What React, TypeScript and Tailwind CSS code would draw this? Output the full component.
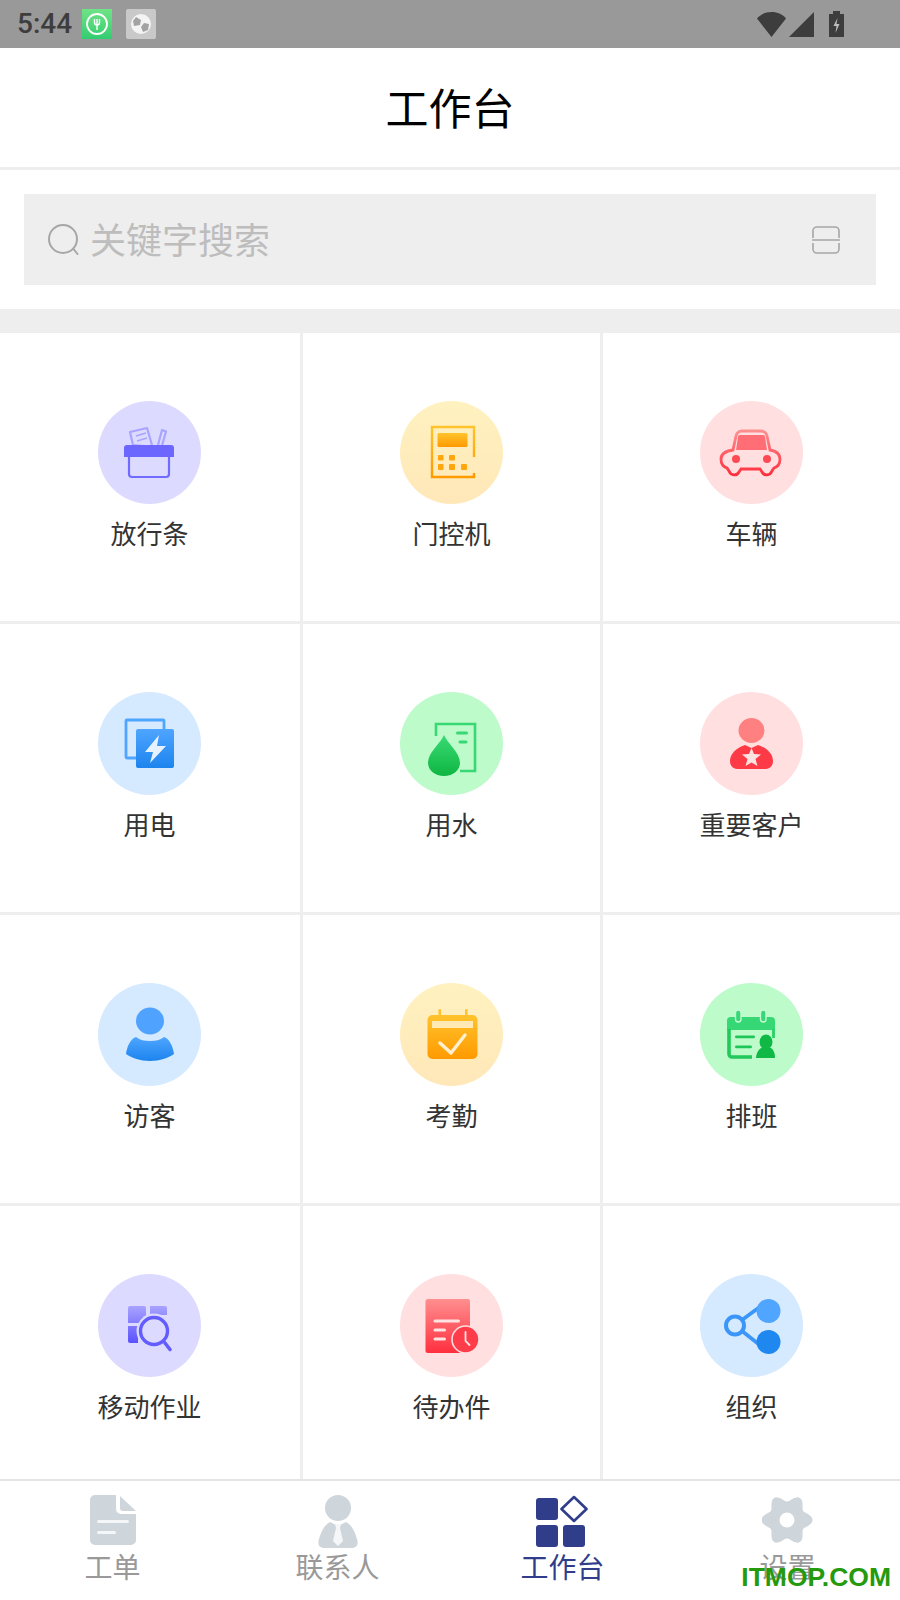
import React, { useId } from 'react';

const tones = {
  purple: { bg: 'bg-[#dcdbff]', from: '#a8a3ff', to: '#5a52ff' },
  yellow: { bg: 'bg-gradient-to-b from-[#fff2c0] to-[#ffe7b8]', from: '#ffc32d', to: '#ff9a00' },
  red: { bg: 'bg-[#ffdfdf]', from: '#ff8f8f', to: '#ff2f3f' },
  blue: { bg: 'bg-[#d5e9ff]', from: '#4fa5ff', to: '#1c84ee' },
  green: { bg: 'bg-[#bdfbca]', from: '#38da74', to: '#0fb642' },
};

type Tone = keyof typeof tones;

// all glyphs are drawn in the 103x103 box of the circle
const glyphs: Record<string, (f: string) => React.ReactNode> = {
  pass: () => (
    <>
      <g fill="none" stroke="#a9a4ff" strokeWidth="2.2" strokeLinejoin="round">
        <path d="M46 45l-11-1-3-13 17-4 5 17" />
        <path d="M38 35l10-3M39 40l10-3" strokeWidth="1.8" />
        <path d="M60 44l4-15 4 1.500-4 14" />
      </g>
      <path d="M26 47a3 3 0 0 1 3-3h44a3 3 0 0 1 3 3v9H26z" fill="#6c66ff" />
      <path d="M31 56v17a3 3 0 0 0 3 3h34a3 3 0 0 0 3-3V56" fill="none" stroke="#716bff" strokeWidth="2.2" />
    </>
  ),
  door: (f) => (
    <>
      <path d="M74 56V26H32v50h42v-4" fill="none" stroke={f} strokeWidth="2.4" />
      <rect x="37.500" y="32" width="30" height="14" rx="1.500" fill={f} />
      <g fill="#ffa50e">
        <rect x="38" y="54" width="5.500" height="5.500" rx="1" />
        <rect x="49" y="54" width="6" height="5.500" rx="1" />
        <rect x="38" y="63" width="5.500" height="6" rx="1" />
        <rect x="49" y="63" width="6" height="6" rx="1" />
        <rect x="61" y="63" width="6" height="6" rx="1" />
      </g>
    </>
  ),
  car: (f) => (
    <>
      <path
        d="M33 49l3-14a6 6 0 0 1 6-5h19a6 6 0 0 1 6 5l3 14c6 1 10 4 10 9 0 5-3 8-6 9l-2 3c-2 5-8 5-10 1l-2-3H41l-2 3c-2 4-8 4-10-1l-2-3c-3-1-6-4-6-9 0-5 5-8 12-9z"
        fill="none"
        stroke={f}
        strokeWidth="2.800"
      />
      <path d="M36 49l2-13a2 2 0 0 1 2-2h23a2 2 0 0 1 2 2l2 13z" fill="#ff6e74" />
      <circle cx="36" cy="58" r="4" fill="#ff4a55" />
      <circle cx="67" cy="58" r="4" fill="#ff4a55" />
    </>
  ),
  power: (f) => (
    <>
      <path d="M38 66h-9a1 1 0 0 1-1-1V29a1 1 0 0 1 1-1h36a1 1 0 0 1 1 1v8" fill="none" stroke="#4fa5ff" strokeWidth="2.800" />
      <rect x="38" y="37" width="38" height="39" rx="2" fill={f} />
      <path d="M61 43L47 60h8l-3 11 16-17h-9z" fill="#e6f2ff" />
    </>
  ),
  water: (f) => (
    <>
      <path d="M36 44V32h39v47H60" fill="none" stroke="#38d874" strokeWidth="2.600" />
      <rect x="56" y="39.500" width="12" height="3" rx="1.500" fill="#38d874" />
      <rect x="58.500" y="48.500" width="9" height="3" rx="1.500" fill="#38d874" />
      <path d="M44 43c3 8 16 17 16 28 0 7-7 13-16 13s-16-6-16-13c0-11 13-20 16-28z" fill={f} />
    </>
  ),
  vip: () => (
    <>
      <ellipse cx="51.500" cy="38.500" rx="13" ry="12.500" fill="#ff8080" />
      <path d="M45 53l6.500 3 6.500-3c9 3 15 9 15 16 0 6-4 8-9 8H39c-5 0-9-2-9-8 0-7 6-13 15-16z" fill="#ff3a47" />
      <path d="M51.500 56l2.500 6 7 .5-5.500 4.500 2 7-6-3.500-6 3.500 2-7-5.500-4.500 7-.5z" fill="#ffe3e3" />
    </>
  ),
  visitor: (f) => (
    <>
      <ellipse cx="52" cy="38" rx="14" ry="13.500" fill="#4fa3ff" />
      <path d="M38 54c4 3 8 4 14 4s10-1 14-4c6 2 9 10 10 17-6 4-14 7-24 7s-18-3-24-7c1-7 4-15 10-17z" fill={f} />
    </>
  ),
  checkin: (f) => (
    <>
      <rect x="38.500" y="26" width="2.600" height="9" rx="1.300" fill="#ffc32d" />
      <rect x="65" y="26" width="2.600" height="9" rx="1.300" fill="#ffc32d" />
      <rect x="27.500" y="32" width="50" height="44" rx="5" fill={f} />
      <rect x="32" y="38" width="41" height="7" fill="#ffe9b5" />
      <path d="M40 60l11 10 14-18" fill="none" stroke="#fff1cf" strokeWidth="3.400" strokeLinecap="round" strokeLinejoin="round" />
    </>
  ),
  shift: () => (
    <>
      <path d="M27 38a4 4 0 0 1 4-4h40a4 4 0 0 1 4 4v9H27z" fill="#35d874" />
      <rect x="35.500" y="27" width="5.500" height="12" rx="2.700" fill="#35d874" stroke="#c7f8d4" strokeWidth="1.400" />
      <rect x="60.500" y="27" width="5.500" height="12" rx="2.700" fill="#35d874" stroke="#c7f8d4" strokeWidth="1.400" />
      <path d="M29 46v25a3 3 0 0 0 3 3h20" fill="none" stroke="#22c85b" strokeWidth="3.600" />
      <path d="M73.500 46v9" stroke="#2bd066" strokeWidth="2.800" />
      <rect x="35" y="52.500" width="20" height="2.800" rx="1.400" fill="#1fc558" />
      <rect x="35" y="62.500" width="17" height="2.800" rx="1.400" fill="#1fc558" />
      <ellipse cx="66" cy="59" rx="6.500" ry="7.500" fill="#10b945" />
      <path d="M61 65h10c3 2 4 6 4 10H56c0-4 2-8 5-10z" fill="#10b945" />
    </>
  ),
  work: (f) => (
    <>
      <path d="M32 32h14a2 2 0 0 1 2 2v15H30V34a2 2 0 0 1 2-2zM52 32h15a2 2 0 0 1 2 2v7H52zM30 52h10v17h-8a2 2 0 0 1-2-2z" fill={f} />
      <circle cx="56" cy="57" r="17.500" fill="#dcdbff" />
      <circle cx="56" cy="57" r="13.500" fill="#dcdbff" stroke="#635cff" strokeWidth="3.400" />
      <path d="M67 69l5 6.500" stroke="#635cff" strokeWidth="3.600" strokeLinecap="round" />
    </>
  ),
  todo: (f) => (
    <>
      <path d="M28 25h40a2 2 0 0 1 2 2v52H28a2.500 2.500 0 0 1-2.500-2.500V27.500A2.500 2.500 0 0 1 28 25z" fill={f} />
      <rect x="33.500" y="45.500" width="26.500" height="3" rx="1.500" fill="#ffe3e3" />
      <rect x="33.500" y="54.500" width="12.500" height="3" rx="1.500" fill="#ffe3e3" />
      <rect x="33.500" y="63.500" width="12.500" height="3" rx="1.500" fill="#ffe3e3" />
      <circle cx="65.500" cy="65.500" r="13.500" fill="#ff3d4a" stroke="#ffdfdf" strokeWidth="1.600" />
      <path d="M65.500 58v9l4 4" fill="none" stroke="#ffe3e3" strokeWidth="1.800" strokeLinecap="round" />
    </>
  ),
  org: () => (
    <>
      <path d="M42 46l19-14M42 57l19 15" stroke="#3a96f8" strokeWidth="3.600" />
      <circle cx="35" cy="51.500" r="9" fill="#d5e9ff" stroke="#3a96f8" strokeWidth="4" />
      <circle cx="68.500" cy="37" r="12" fill="#4fa5ff" />
      <circle cx="68.500" cy="68" r="12" fill="#1f87f0" />
    </>
  ),
};

const items: { label: string; tone: Tone; glyph: string }[] = [
  { label: '放行条', tone: 'purple', glyph: 'pass' },
  { label: '门控机', tone: 'yellow', glyph: 'door' },
  { label: '车辆', tone: 'red', glyph: 'car' },
  { label: '用电', tone: 'blue', glyph: 'power' },
  { label: '用水', tone: 'green', glyph: 'water' },
  { label: '重要客户', tone: 'red', glyph: 'vip' },
  { label: '访客', tone: 'blue', glyph: 'visitor' },
  { label: '考勤', tone: 'yellow', glyph: 'checkin' },
  { label: '排班', tone: 'green', glyph: 'shift' },
  { label: '移动作业', tone: 'purple', glyph: 'work' },
  { label: '待办件', tone: 'red', glyph: 'todo' },
  { label: '组织', tone: 'blue', glyph: 'org' },
];

// six soft lobes, pointing left and right
const gearPath = () => {
  const pts: string[] = [];
  for (let i = 0; i < 96; i++) {
    const a = (i / 96) * Math.PI * 2;
    const r = 22 + 3.5 * Math.cos(6 * a);
    pts.push(`${(25 + r * Math.cos(a)).toFixed(2)} ${(25 + r * Math.sin(a)).toFixed(2)}`);
  }
  return `M${pts.join('L')}z`;
};

const GridIcon = ({ tone, glyph }: { tone: Tone; glyph: string }) => {
  const id = useId();
  const t = tones[tone];
  return (
    <div className={`w-[103px] h-[103px] rounded-full ${t.bg}`}>
      <svg width="103" height="103" viewBox="0 0 103 103">
        <defs>
          <linearGradient id={id} x1="0" y1="0" x2="0" y2="1">
            <stop offset="0" stopColor={t.from} />
            <stop offset="1" stopColor={t.to} />
          </linearGradient>
        </defs>
        {glyphs[glyph](`url(#${id})`)}
      </svg>
    </div>
  );
};

const StatusBar = () => (
  <div className="h-12 bg-[#999999] flex items-center shrink-0">
    <span className="ml-[17px] text-[28px] leading-none font-medium text-[#3d3d3d] font-['Roboto',sans-serif] w-[65px]">5:44</span>
    <div className="w-[30px] h-[30px] bg-gradient-to-b from-[#6fe388] to-[#30cc70] flex items-center justify-center">
      <svg width="24" height="24" viewBox="0 0 24 24">
        <circle cx="12" cy="12" r="10" fill="none" stroke="#fff" strokeWidth="1.800" />
        <path d="M12 7v11M9.500 7v3.500a2.500 2.500 0 0 0 5 0V7" fill="none" stroke="#fff" strokeWidth="1.400" />
      </svg>
    </div>
    <div className="ml-3.5 w-[30px] h-[30px] rounded-[2px] bg-[#c9c9c9] flex items-center justify-center">
      <svg width="24" height="24" viewBox="0 0 24 24">
        <circle cx="12" cy="12" r="10" fill="#f4f4f4" />
        <path d="M7 5l5 3-1 5-6 1-1-5zM15 11l5 1-1 6-5 2-2-5z" fill="#a3a3a3" />
      </svg>
    </div>
    <div className="ml-auto mr-[56px] flex items-end gap-[3px]">
      <svg width="29" height="25" viewBox="0 0 29 25">
        <path d="M0 6.500C3 2.500 8.500 0 14.500 0S26 2.500 29 6.500L14.500 25z" fill="#3d3d3d" />
      </svg>
      <svg width="25" height="25" viewBox="0 0 25 25">
        <path d="M25 0v25H0z" fill="#3d3d3d" />
      </svg>
      <svg width="15" height="26" viewBox="0 0 15 26" className="ml-3">
        <path d="M4 0h7v3h4v23H0V3h4z" fill="#3d3d3d" />
        <path d="M8.500 7L4.500 15h3l-1 7 4-9h-3z" fill="#bdbdbd" />
      </svg>
    </div>
  </div>
);

const BottomNav = () => (
  <div className="h-[121px] shrink-0 bg-white border-t-2 border-[#e4e4e4] grid grid-cols-4 relative">
    <div className="flex flex-col items-center pt-[14px]">
      <svg width="46" height="53" viewBox="0 0 46 53">
        <path d="M5 0h21v14a5 5 0 0 0 5 5h15v26a5 5 0 0 1-5 5H5a5 5 0 0 1-5-5V5a5 5 0 0 1 5-5z" fill="#ced5db" />
        <path d="M30 1l16 15H33a3 3 0 0 1-3-3z" fill="#ced5db" />
        <rect x="7" y="25" width="32" height="3" rx="1.500" fill="#f4f6f7" />
        <rect x="7" y="36" width="19" height="3" rx="1.500" fill="#f4f6f7" />
      </svg>
      <span className="text-[28px] leading-[36px] text-[#999999]">工单</span>
    </div>
    <div className="flex flex-col items-center pt-[14px]">
      <svg width="42" height="53" viewBox="0 0 42 53">
        <ellipse cx="21" cy="13" rx="13" ry="13" fill="#ced5db" />
        <path d="M13 27l8 4 8-4c6 3 9 10 11 17 2 6-1 9-6 9H8c-5 0-8-3-6-9 2-7 5-14 11-17z" fill="#ced5db" />
        <path d="M18 29h6l-1 4 3 13-5 5-5-5 3-13z" fill="#f5f6f7" />
      </svg>
      <span className="text-[28px] leading-[36px] text-[#999999]">联系人</span>
    </div>
    <div className="flex flex-col items-center pt-[14px]">
      <svg width="52" height="53" viewBox="0 0 52 53" className="mr-[2px]">
        <rect x="0" y="3" width="22" height="22" rx="3" fill="#2f3d8b" />
        <rect x="0" y="30" width="22" height="22" rx="3" fill="#2f3d8b" />
        <rect x="27" y="30" width="22" height="22" rx="3" fill="#2f3d8b" />
        <path d="M38 2l12.500 12-12.500 12-12.500-12z" fill="none" stroke="#2f3d8b" strokeWidth="2.600" strokeLinejoin="round" />
      </svg>
      <span className="text-[28px] leading-[36px] text-[#2f3d8b]">工作台</span>
    </div>
    <div className="flex flex-col items-center pt-[14px]">
      <svg width="52" height="53" viewBox="0 0 52 53">
        <path d={gearPath()} fill="#ced5db" />
        <circle cx="25" cy="25" r="7.500" fill="#ffffff" />
      </svg>
      <span className="text-[28px] leading-[36px] text-[#999999]">设置</span>
    </div>
    <span className="absolute right-[9px] bottom-[10px] text-[26.500px] leading-[26px] font-bold text-[#249a0c] font-['Liberation_Sans',sans-serif]">
      ITMOP.COM
    </span>
  </div>
);

export default function App() {
  return (
    <div className="w-[900px] h-[1600px] flex flex-col bg-white overflow-hidden font-['Noto_Sans_CJK_SC',sans-serif]">
      <StatusBar />
      <div className="h-[122px] shrink-0 flex items-center justify-center border-b-[3px] border-[#eeeeee]">
        <h1 className="text-[43px] leading-none text-black pb-[2px]">工作台</h1>
      </div>
      <div className="h-[163px] shrink-0 px-6 pt-6 border-b-[24px] border-[#eeeeee]">
        <div className="h-[91px] bg-[#eeeeee] flex items-center pl-6 pr-[36px]">
          <svg width="31" height="31" viewBox="0 0 31 31" fill="none" stroke="#a6a6a6" strokeWidth="2" className="shrink-0">
            <circle cx="15" cy="15" r="14" />
            <path d="M25.500 25l4 5" strokeLinecap="round" />
          </svg>
          <span className="ml-[11px] pb-1 text-[36px] leading-none text-[#bdbdbd]">关键字搜索</span>
          <svg width="28" height="28" viewBox="0 0 28 28" className="ml-auto" fill="none" stroke="#a6a6a6" strokeWidth="1.600">
            <path d="M1 12V5a4 4 0 0 1 4-4h18a4 4 0 0 1 4 4v7M0 14h28M1 17v6a4 4 0 0 0 4 4h18a4 4 0 0 0 4-4v-6" />
          </svg>
        </div>
      </div>
      <div className="flex-1 min-h-0 overflow-hidden grid grid-cols-[303px_300px_297px] auto-rows-[291px]">
        {items.map((item, i) => (
          <div
            key={item.label}
            className={`flex flex-col items-center pt-[68px] border-b-[3px] border-[#eeeeee] ${i % 3 < 2 ? 'border-r-[3px]' : ''} ${i % 3 === 0 ? 'pr-px' : ''}`}
          >
            <GridIcon tone={item.tone} glyph={item.glyph} />
            <span className="mt-[14px] text-[26px] leading-[30px] text-[#333333]">{item.label}</span>
          </div>
        ))}
      </div>
      <BottomNav />
    </div>
  );
}
